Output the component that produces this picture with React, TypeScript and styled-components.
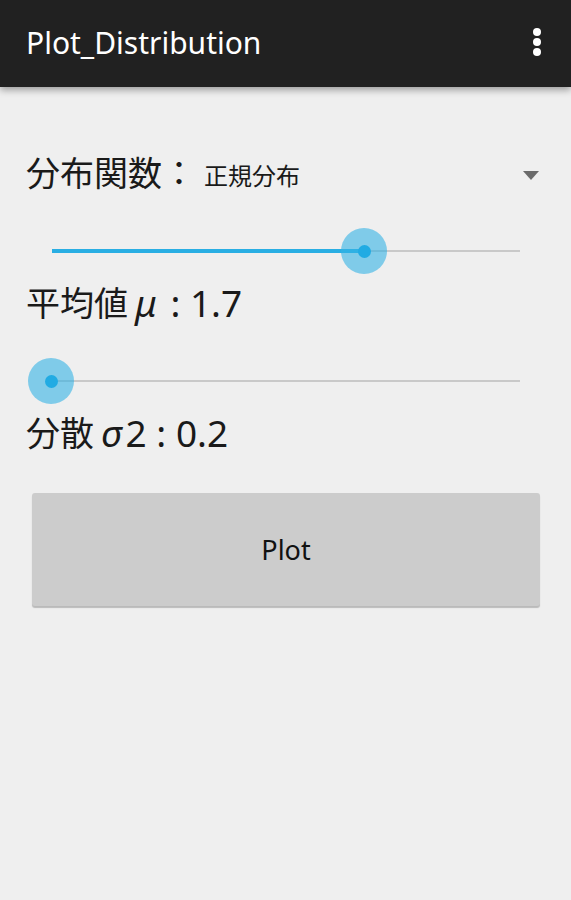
import * as React from "react";
import styled, { createGlobalStyle } from "styled-components";

const GlobalStyle = createGlobalStyle`
  html, body {
    margin: 0;
    padding: 0;
    background: #efefef;
  }
  body {
    font-family: "Noto Sans", "Noto Sans CJK JP", sans-serif;
  }
`;

const Page = styled.div`
  width: 571px;
  min-height: 900px;
  background: #efefef;
`;

const ActionBar = styled.div`
  position: relative;
  z-index: 1;
  height: 87px;
  background: #212121;
  display: flex;
  align-items: center;
  justify-content: space-between;
  padding: 0 24px 0 26px;
  box-shadow: 0 3px 7px rgba(0, 0, 0, 0.35);
`;

const Title = styled.div`
  color: #ffffff;
  font: 400 30px/1 "Noto Sans", sans-serif;
  margin-top: -2px;
`;

const Kebab = styled.svg`
  width: 20px;
  height: 40px;
  display: block;
`;

const Content = styled.div`
  padding-top: 56px;
`;

const SpinnerRow = styled.div`
  height: 60px;
  display: flex;
  align-items: center;
  padding: 0 32px 0 26px;
`;

const Label = styled.div`
  color: #1a1a1a;
  font: 400 34px/1 "Noto Sans", "Noto Sans CJK JP", sans-serif;
  white-space: nowrap;
`;

const SpinnerValue = styled.div`
  flex: 1;
  color: #1a1a1a;
  font: 400 24px/1 "Noto Sans CJK JP", sans-serif;
  margin-left: 8px;
  padding-top: 4px;
`;

const Caret = styled.div`
  width: 0;
  height: 0;
  border-left: 8px solid transparent;
  border-right: 8px solid transparent;
  border-top: 9px solid #6b6b6b;
  margin-top: 4px;
`;

const SliderBox = styled.div<{ $top: number }>`
  height: 48px;
  margin-top: ${p => p.$top}px;
  padding: 0 51px 0 52px;
  display: flex;
  align-items: center;
`;

const Track = styled.div`
  position: relative;
  flex: 1;
  height: 2px;
  background: #c9c9c9;
`;

const TrackFill = styled.div`
  position: absolute;
  left: 0;
  top: -1px;
  height: 4px;
  background: #29aee3;
`;

const Thumb = styled.div`
  position: absolute;
  top: 1px;
  width: 46px;
  height: 46px;
  margin: -23px 0 0 -24px;
  border-radius: 50%;
  background: rgba(51, 178, 229, 0.6);
  display: flex;
  align-items: center;
  justify-content: center;

  &::after {
    content: "";
    width: 13px;
    height: 13px;
    border-radius: 50%;
    background: #21abe3;
  }
`;

const ValueLabel = styled.div<{ $top: number }>`
  margin-top: ${p => p.$top}px;
  padding-left: 26px;
  height: 50px;
  display: flex;
  align-items: center;
  color: #1a1a1a;
  font: 400 34px/1 "Noto Sans CJK JP", sans-serif;
  white-space: nowrap;
`;

const Greek = styled.span`
  font: italic 400 37px/1 "Noto Sans", sans-serif;
  margin: 0 4px 0 7px;
`;

const Latin = styled.span`
  font: 400 37px/1 "Noto Sans", sans-serif;
  white-space: pre;
`;

const PlotButton = styled.button`
  display: flex;
  align-items: center;
  justify-content: center;
  margin: 36px 31px 0 32px;
  width: calc(100% - 63px);
  height: 113px;
  border: none;
  border-radius: 3px;
  background: #cccccc;
  box-shadow: 0 2px 1px rgba(0, 0, 0, 0.22);
  color: #111111;
  font: 400 27px/1 "Noto Sans", sans-serif;
  padding: 0;
`;

const Slider: React.FC<{ value: number; top: number }> = ({ value, top }) => (
  <SliderBox $top={top}>
    <Track>
      <TrackFill style={{ width: `${value * 100}%` }} />
      <Thumb style={{ left: `${value * 100}%` }} />
    </Track>
  </SliderBox>
);

export default function App() {
  return (
    <Page>
      <GlobalStyle />
      <ActionBar>
        <Title>Plot_Distribution</Title>
        <Kebab viewBox="0 0 20 40">
          <circle cx="10" cy="8" r="4" fill="#fff" />
          <circle cx="10" cy="18" r="4" fill="#fff" />
          <circle cx="10" cy="28" r="4" fill="#fff" />
        </Kebab>
      </ActionBar>
      <Content>
        <SpinnerRow>
          <Label>分布関数：</Label>
          <SpinnerValue>正規分布</SpinnerValue>
          <Caret />
        </SpinnerRow>
        <Slider value={0.669} top={24} />
        <ValueLabel $top={2}>
          平均値<Greek>μ</Greek>
          <Latin> : 1.7</Latin>
        </ValueLabel>
        <Slider value={0} top={30} />
        <ValueLabel $top={2}>
          分散<Greek>σ</Greek>
          <Latin>2 : 0.2</Latin>
        </ValueLabel>
        <PlotButton>Plot</PlotButton>
      </Content>
    </Page>
  );
}
